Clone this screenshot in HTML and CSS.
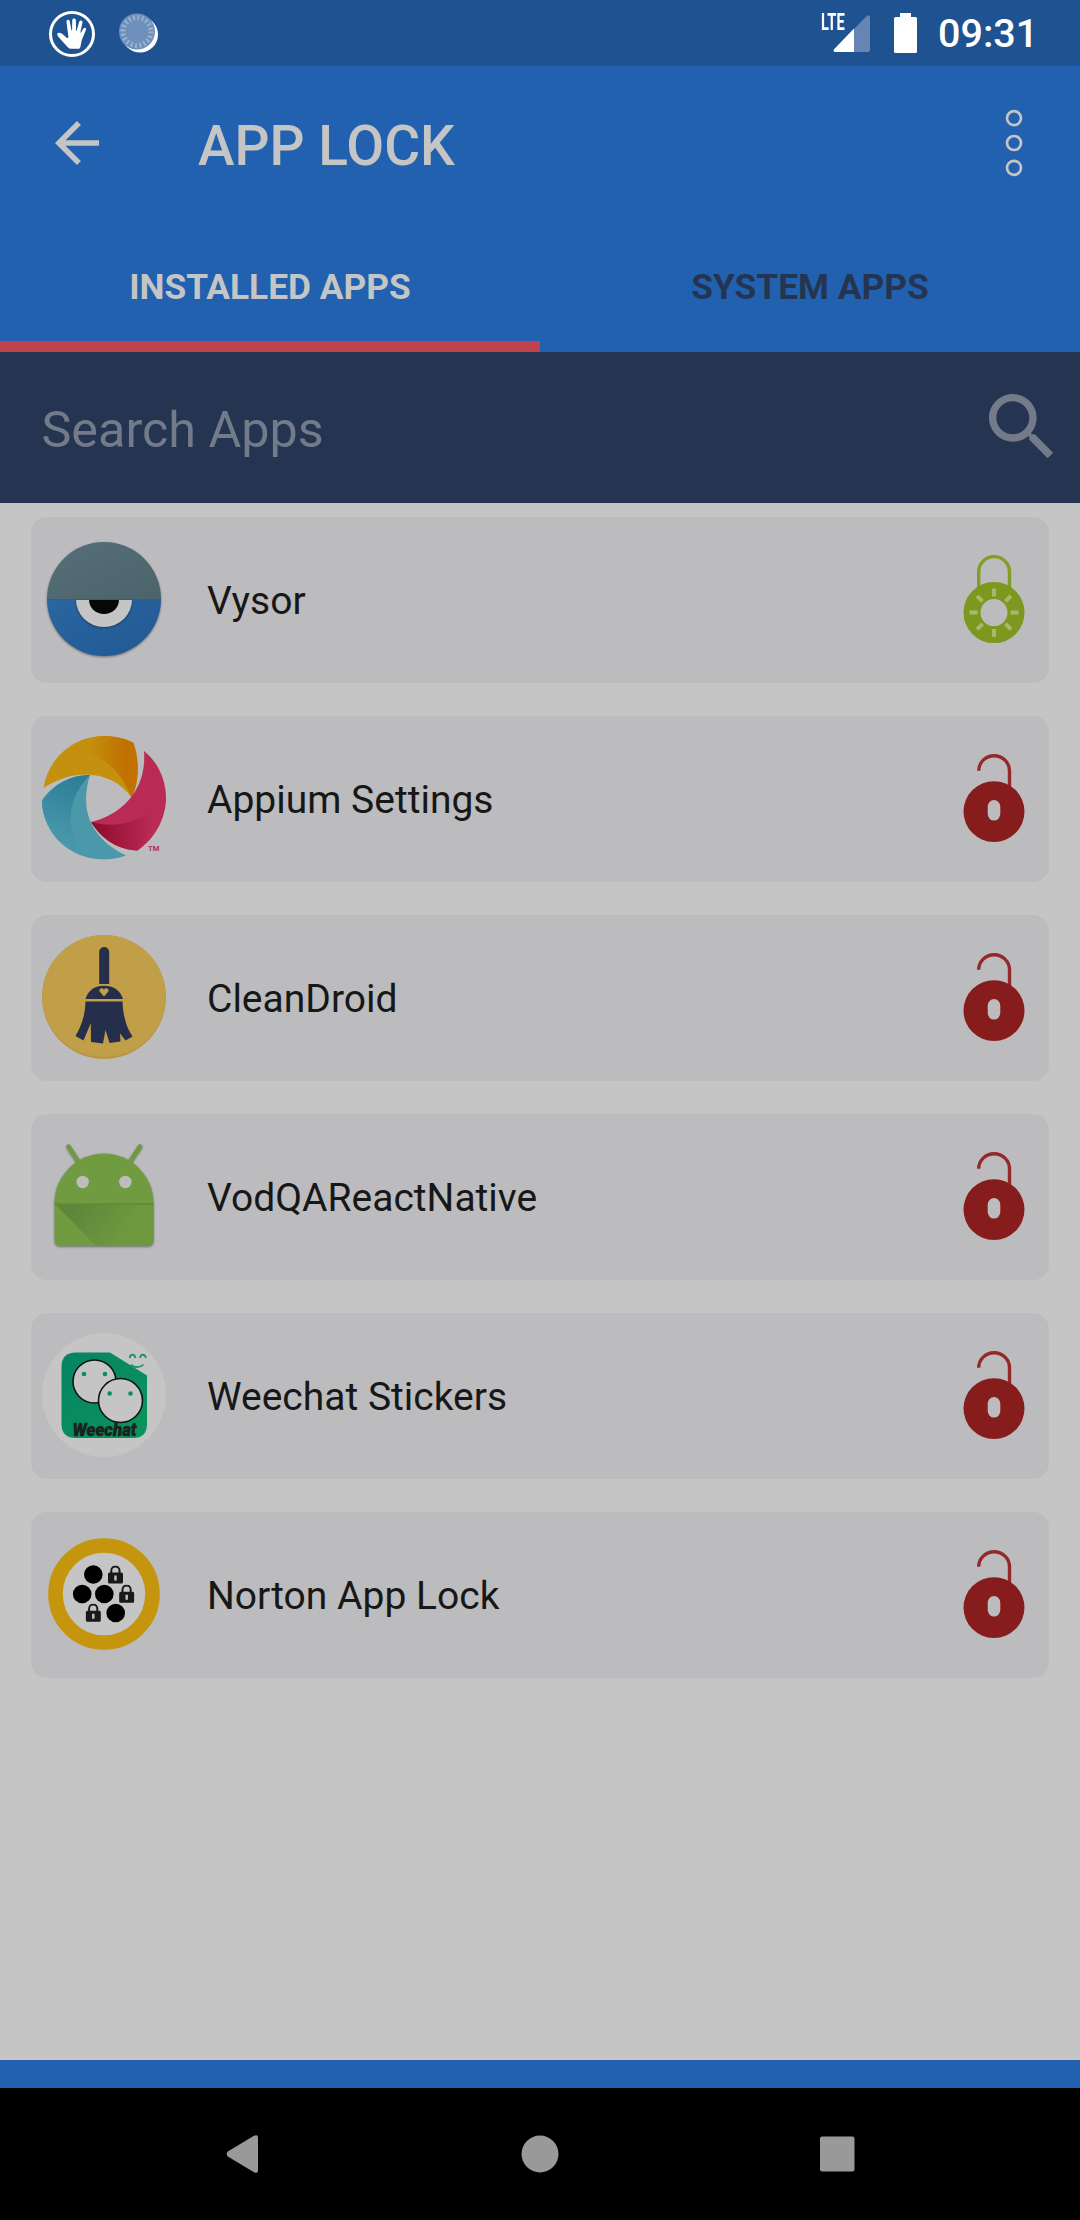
FILE: index.html
```html
<!DOCTYPE html>
<html lang="en">
<head>
<meta charset="utf-8">
<title>App Lock</title>
<link rel="stylesheet" href="styles.css">
</head>
<body>
<svg class="defs" width="0" height="0" aria-hidden="true">
  <defs>
    <linearGradient id="lid" x1="0" y1="0" x2="1" y2="1"><stop offset="0" stop-color="#566f78"/><stop offset="1" stop-color="#4c636b"/></linearGradient>
    <linearGradient id="iris" x1="0" y1="0" x2="1" y2="1"><stop offset="0" stop-color="#2a669f"/><stop offset="1" stop-color="#215894"/></linearGradient>
    <linearGradient id="orange" x1="0.3" y1="0" x2="0.8" y2="0"><stop offset="0" stop-color="#c3900e"/><stop offset="1" stop-color="#c17100"/></linearGradient>
    <linearGradient id="teal" x1="0.7" y1="0" x2="0.4" y2="1"><stop offset="0" stop-color="#2b7e96"/><stop offset="1" stop-color="#4c9aad"/></linearGradient>
    <linearGradient id="crimson" x1="0" y1="0" x2="1" y2="0"><stop offset="0" stop-color="#8d0a2a"/><stop offset="0.9" stop-color="#b92a54"/></linearGradient>
    <linearGradient id="fold" gradientUnits="userSpaceOnUse" x1="30" y1="75" x2="75" y2="105"><stop offset="0" stop-color="#5f853a"/><stop offset="1" stop-color="#6d983d"/></linearGradient>
    <linearGradient id="chat" x1="0" y1="0" x2="1" y2="1"><stop offset="0" stop-color="#068362"/><stop offset="1" stop-color="#0b955d"/></linearGradient>
    <symbol id="unlocked" viewBox="0 0 62 88">
      <path d="M15.700 16.800a15.400 15.100 0 0 1 30.800 0V34" fill="none" stroke="#93292b" stroke-width="3.400"/>
      <path fill-rule="evenodd" fill="#871c1d" d="M31 27.200a30.500 30.400 0 1 1 0 60.800a30.500 30.400 0 0 1 0-60.800zM31 46a6.300 6.500 0 0 0-6.300 6.500v7.600a6.300 6.500 0 0 0 12.600 0v-7.600a6.300 6.500 0 0 0-6.300-6.500z"/>
    </symbol>
    <symbol id="padlock" viewBox="0 0 16 19">
      <path d="M3.800 8V5a4.100 4.100 0 0 1 8.200 0v3" fill="none" stroke="#19181a" stroke-width="2"/>
      <path fill-rule="evenodd" fill="#19181a" d="M2 7h12a1.500 1.500 0 0 1 1.500 1.500v8A1.500 1.500 0 0 1 14 18H2a1.500 1.500 0 0 1-1.500-1.500v-8A1.500 1.500 0 0 1 2 7zM6.800 10v5h2.400v-5z"/>
    </symbol>
  </defs>
</svg>

<div class="screen">
  <header class="status">
    <svg class="status-hand" width="48" height="48" viewBox="0 0 48 48">
      <circle cx="24" cy="24" r="21.500" fill="none" stroke="#fff" stroke-width="3"/>
      <path fill="#fff" d="M9 23.500c1.500-1.500 4.500-.5 6.500 1.500l3.500 3c1 .5 1.500-.5 1.300-2L18.500 12c-.2-2.500 2.800-3 3.300-.5l1.700 9 .6 0 .1-10.200c.2-2.300 3.600-2.300 3.700 0l.1 10.400.6.100 2.600-9c.8-2.200 3.700-1.400 3.300.8l-2.200 10 .6.200 2.500-4.200c1.100-1.800 3.300-.7 2.600 1.100l-4.200 10.300-1.400 7c-.4 1.300-1 1.800-2.200 1.800h-7.400c-1.500 0-2.500-.8-3.400-2l-4.200-4.500-5-5.800c-.8-.9-1.200-2-.6-3z"/>
    </svg>
    <svg class="status-dial" width="40" height="42" viewBox="0 0 40 42">
      <circle cx="20" cy="21.500" r="18" fill="#fff"/>
      <circle cx="17" cy="18.500" r="18" fill="#6e90ba"/>
      <circle cx="17" cy="18.500" r="14" fill="none" stroke="#9db4d1" stroke-width="5" stroke-dasharray="1.800 2.600"/>
    </svg>
    <div class="status-right">
      <span class="lte">LTE</span>
      <svg class="signal" width="38" height="38" viewBox="0 0 38 38">
        <path fill="#6685b2" d="M21 14L34 .8Q37-.8 37 2V35Q37 37 35 37H21z"/>
        <path fill="#fff" d="M21 13.500V37H1.800Q0 36.500.8 34.500z"/>
      </svg>
      <svg class="battery" width="23" height="40" viewBox="0 0 23 40">
        <path fill="#fff" d="M6 0H17V4H21.500Q23 4 23 5.500V38.500Q23 40 21.500 40H1.500Q0 40 0 38.500V5.500Q0 4 1.500 4H6z"/>
      </svg>
      <span class="clock">09:31</span>
    </div>
  </header>

  <div class="appbar">
    <div class="toolbar">
      <svg class="back" width="66" height="66" viewBox="0 0 24 24"><path fill="#c5c5c5" d="M20 11H7.830l5.590-5.590L12 4l-8 8 8 8 1.410-1.410L7.830 13H20v-2z"/></svg>
      <h1 class="title">APP LOCK</h1>
      <svg class="more" width="18" height="68" viewBox="0 0 18 68"><g fill="none" stroke="#c5c5c5" stroke-width="2.700"><circle cx="9" cy="9.200" r="7"/><circle cx="9" cy="34" r="7"/><circle cx="9" cy="58.800" r="7"/></g></svg>
    </div>
    <nav class="tabs">
      <div class="tab active">INSTALLED APPS</div>
      <div class="tab">SYSTEM APPS</div>
    </nav>
  </div>

  <div class="search">
    <span class="hint">Search Apps</span>
    <svg width="88" height="88" viewBox="0 0 24 24"><path fill="#737a8a" d="M15.500 14h-.79l-.28-.27C15.410 12.590 16 11.110 16 9.500 16 5.910 13.090 3 9.500 3S3 5.910 3 9.500 5.910 16 9.500 16c1.610 0 3.090-.59 4.230-1.570l.27.28v.79l5 4.990L20.490 19l-4.990-5zm-6 0C7.010 14 5 11.990 5 9.500S7.010 5 9.500 5 14 7.010 14 9.500 11.990 14 9.500 14z"/></svg>
  </div>

  <main class="list">
    <div class="card">
      <svg class="icon vysor" viewBox="0 0 124 124">
        <g class="shade">
          <path fill="url(#lid)" d="M5 62a57 57 0 0 1 114 0z"/>
          <path fill="url(#iris)" d="M5 62a57 57 0 0 0 114 0z"/>
        </g>
        <path class="soft" fill="#c5c5c5" d="M34 62.500a28 27.500 0 0 0 56 0z"/>
        <path fill="#070707" d="M47 62.500c0 8 6 14.500 15 14.500s15-6.500 15-14.500z"/>
        <path stroke="#405c68" d="M5 62.500h114"/>
      </svg>
      <span class="name">Vysor</span>
      <svg class="lock" viewBox="0 0 62 88">
        <path d="M15.700 34V17a15.400 15.400 0 0 1 30.800 0v17" fill="none" stroke="#829e26" stroke-width="3.400"/>
        <circle cx="31" cy="57.600" r="22" fill="none" stroke="#7c981e" stroke-width="17"/>
        <g stroke="#a9b76f" stroke-width="4"><path d="M31 33.500v8M31 74v8M6.500 57.600h8M47.500 57.600h8"/><path d="M14 40.800l5.500 5.500M42.500 68.900l5.500 5.500M48 40.800l-5.500 5.500M19.500 68.900L14 74.400"/></g>
      </svg>
    </div>

    <div class="card">
      <svg class="icon" viewBox="0 0 124 124">
        <path fill="#c3910d" d="M1.500 52C6 22 32 0 62 0c10 0 21 2 29.500 7C97 22 98 46 89.500 61.500 72 36 35 30 1.500 52z"/>
        <path fill="url(#orange)" d="M27 15C38 5 50 0 62 0c10 0 21 2 29.500 7C97 22 98 46 89.500 61.500 78 31 55 15 27 15z"/>
        <path fill="#b92a54" d="M102 15c14 11 22 29 22 47 0 20-11 41-28.500 52.500C77 114 60 104 49 86 82 78 105 52 102 15z"/>
        <path fill="url(#crimson)" d="M49 86c28 7 50 0 66-18 -1 18-5 34-19.500 46.500C77 114 60 104 49 86z"/>
        <path fill="#4c98ab" d="M48 39C38 71 46 101 84 119.500 42 134 1 106 0 65 10 49 28 39 48 39z"/>
        <path fill="url(#teal)" d="M48 39C28 59 23 84 36 113 14 106 0 86 0 65 10 49 28 39 48 39z"/>
        <text class="tm" x="106" y="115" textLength="11.500" lengthAdjust="spacingAndGlyphs">TM</text>
      </svg>
      <span class="name">Appium Settings</span>
      <svg class="lock"><use href="#unlocked"/></svg>
    </div>

    <div class="card">
      <svg class="icon" viewBox="0 0 124 124">
        <circle cx="62" cy="62" r="62" fill="#b89543"/>
        <ellipse cx="62" cy="61" rx="61.800" ry="61" fill="#c19f48"/>
        <path fill="#252f4b" d="M57.200 49V17a5 5 0 0 1 10 0v32z"/>
        <path fill="#252f4b" d="M43.500 64C46 55 53 50.700 62 50.700S78.500 55 81 64zM43.500 66.500H80.500C81 80 84 92 90.500 101.500L83.500 105.500 78 98.500 78.500 106.500 67.500 108 63.500 95 61 108.500 49 107 48.800 88 41.500 105.500 33.500 101C40 90 43 80 43.500 66.500z"/>
        <path fill="#c19f48" d="M62 61.500l-4-4.500c-2-3 2-5.500 4-2.500 2-3 6-.5 4 2.500z"/>
      </svg>
      <span class="name">CleanDroid</span>
      <svg class="lock"><use href="#unlocked"/></svg>
    </div>

    <div class="card">
      <svg class="icon" viewBox="0 0 124 124">
        <g class="shade">
          <path stroke="#6e9a40" stroke-width="4.500" stroke-linecap="round" d="M26.500 12.500L38 30M98 12.500L86.500 30"/>
          <path fill="#709b40" d="M12.500 69.500a49.500 50 0 0 1 99 0V106q0 6-6 6H18.500q-6 0-6-6z"/>
        </g>
        <path fill="url(#fold)" d="M12.500 69.500h99V106q0 6-6 6H54z"/>
        <path fill="#648d3a" d="M12.500 69h99v2h-99z"/>
        <circle cx="40.700" cy="48" r="6.200" fill="#bdbdbf"/><circle cx="83.300" cy="48" r="6.200" fill="#bdbdbf"/>
      </svg>
      <span class="name">VodQAReactNative</span>
      <svg class="lock"><use href="#unlocked"/></svg>
    </div>

    <div class="card">
      <svg class="icon" viewBox="0 0 124 124">
        <circle cx="62" cy="62" r="62" fill="#c5c5c5"/>
        <path fill="url(#chat)" d="M34 19.500H68L105 42.500V91q0 14-14 14H34q-14.500 0-14.500-14V34q0-14.500 14.500-14.500z"/>
        <g fill="#c5c5c5" stroke="#101411" stroke-width="1.600"><circle cx="52.500" cy="48.500" r="21.500"/><circle cx="78.500" cy="67.500" r="22"/></g>
        <g fill="#0a8d60"><circle cx="42" cy="41" r="2.300"/><circle cx="63" cy="41" r="2.300"/><circle cx="67.700" cy="60.500" r="2.300"/><circle cx="88.500" cy="60.500" r="2.300"/></g>
        <g fill="none" stroke="#14906a" stroke-width="1.700"><path d="M87.500 25c1-4.500 5-4.500 6 0M98 25c1-4.500 5-4.500 6 0M89 31.500c3 3.500 9 3.500 12.500 0"/></g>
        <text class="weechat" x="30.500" y="102.700" textLength="64" lengthAdjust="spacingAndGlyphs">Weechat</text>
      </svg>
      <span class="name">Weechat Stickers</span>
      <svg class="lock"><use href="#unlocked"/></svg>
    </div>

    <div class="card">
      <svg class="icon" viewBox="0 0 124 124">
        <circle cx="62" cy="62" r="48.500" fill="#c5c5c5" stroke="#c4950d" stroke-width="14.600"/>
        <g fill="#000"><circle cx="51.300" cy="42.500" r="9.300"/><circle cx="40.200" cy="62" r="9.300"/><circle cx="62.300" cy="62" r="9.300"/><circle cx="73.700" cy="81" r="9.300"/></g>
        <use href="#padlock" x="65.500" y="33.500" width="16" height="19"/>
        <use href="#padlock" x="76.700" y="52.700" width="16" height="19"/>
        <use href="#padlock" x="43.300" y="71.700" width="16" height="19"/>
      </svg>
      <span class="name">Norton App Lock</span>
      <svg class="lock"><use href="#unlocked"/></svg>
    </div>
  </main>

  <div class="strip"></div>
  <footer class="navbar">
    <svg width="38" height="40" viewBox="0 0 38 40"><path fill="#999" d="M3.800 17.500Q1.500 20 3.800 22.500L30 38.200Q34 40 34 36.500V3.500Q34 0 30 1.800z"/></svg>
    <svg width="38" height="40" viewBox="0 0 38 40"><circle cx="19" cy="20" r="18.500" fill="#999"/></svg>
    <svg width="38" height="40" viewBox="0 0 38 40"><rect x="2" y="2.500" width="34.500" height="35" rx="2" fill="#999"/></svg>
  </footer>
</div>
</body>
</html>
```
FILE: styles.css
```css
* { box-sizing: border-box; }
body { margin: 0; font-family: Roboto, "Liberation Sans", sans-serif; background: #c5c5c5; }
svg { display: block; flex: none; overflow: visible; }
.defs { position: absolute; }

.screen { width: 1080px; height: 2220px; display: flex; flex-direction: column; overflow: hidden; }

.status { height: 66px; background: #1f5290; display: flex; align-items: flex-start; padding: 0 45px 0 47.500px; color: #fff; }
.status-hand { margin-top: 9.500px; }
.status-dial { margin: 13px 0 0 24px; }
.status-right { width: 214px; margin-left: auto; display: flex; align-items: flex-start; }
.lte { width: 12px; margin-top: 11px; font-size: 23px; font-weight: 700; line-height: 23px; transform: scaleX(.64); transform-origin: 0 0; }
.signal { margin-top: 15px; }
.battery { margin: 13px 0 0 23px; }
.clock { margin: 11px 0 0 21px; font-size: 39.500px; font-weight: 500; line-height: 46px; }

.appbar { height: 286px; background: #2261af; color: #c5c5c5; display: flex; flex-direction: column; }
.toolbar { height: 154px; display: flex; align-items: center; padding: 0 57px 0 44px; }
.title { margin: 5px 0 0 88px; font-size: 55px; font-weight: 500; line-height: 64px; }
.more { margin-left: auto; }
.tabs { height: 132px; display: flex; }
.tab { flex: 1; display: flex; align-items: center; justify-content: center; padding-top: 12px; border-bottom: 11px solid transparent; font-size: 35.350px; font-weight: 700; color: #253551; }
.tab.active { color: #c5c5c5; border-color: #c0434b; }

.search { height: 151px; background: #253551; display: flex; align-items: center; justify-content: space-between; padding: 0 14px 2px 41.500px; }
.hint { color: #737a8a; font-size: 50.300px; padding-top: 6px; }

.list { flex: 1; padding: 14px 31px; display: flex; flex-direction: column; gap: 33px; }
.card { height: 166px; border-radius: 16px; background: #bcbcbe; display: flex; align-items: center; padding: 0 24px 2px 11px; }
.icon { width: 124px; height: 124px; }
.name { margin-left: 41px; padding-top: 4px; font-size: 39px; color: #171717; }
.lock { width: 62px; height: 88px; margin-left: auto; }
.shade { filter: drop-shadow(0 1.500px 1px rgba(0, 0, 0, .4)); }
.soft { filter: drop-shadow(0 1px 1px rgba(0, 0, 0, .35)); }
.tm { font: 700 7px Roboto, sans-serif; fill: #b92a54; }
.weechat { font: italic 900 18px Roboto, sans-serif; fill: #1b211e; stroke: #1b211e; stroke-width: .5px; }

.strip { height: 28px; background: #2261af; }
.navbar { height: 132px; background: #000; display: flex; align-items: center; justify-content: center; gap: 259px; }
```
